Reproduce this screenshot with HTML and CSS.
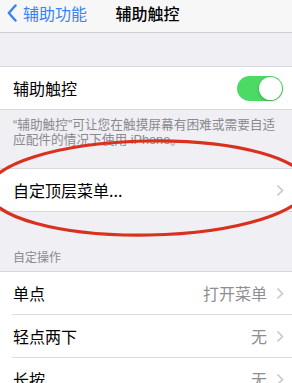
FILE: index.html
```html
<!DOCTYPE html>
<html lang="zh-CN">
<head>
    <meta charset="utf-8" />
    <title>辅助触控</title>
    <link rel="stylesheet" href="styles.css">
</head>
<body>
    <div class="screen">
        <div class="nav_bar">
            <div class="nav_back">
                <svg class="back_icon" width="10" height="18" viewBox="0 0 10 18">
                    <path d="M8.5 1.5 L1.8 9 L8.5 16.5" fill="none" stroke="#3a82f7" stroke-width="2.4" stroke-linecap="round" stroke-linejoin="round" />
                </svg>
                <span>辅助功能</span>
            </div>
            <div class="nav_title">辅助触控</div>
        </div>

        <div class="gap_top"></div>

        <div class="group">
            <div class="row">
                <span class="row_label">辅助触控</span>
                <div class="switch_on"><div class="switch_knob"></div></div>
            </div>
        </div>
        <div class="group_footer">“辅助触控”可让您在触摸屏幕有困难或需要自适应配件的情况下使用 iPhone。</div>

        <div class="group">
            <div class="row">
                <span class="row_label">自定顶层菜单...</span>
                <span class="chevron">
                    <svg width="8" height="13" viewBox="0 0 8 13"><path d="M1.5 1.5 L6.5 6.5 L1.5 11.5" fill="none" stroke="#c7c7cc" stroke-width="1.6" /></svg>
                </span>
            </div>
        </div>

        <div class="group_header">自定操作</div>

        <div class="group">
            <div class="row">
                <span class="row_label">单点</span>
                <span class="row_value">打开菜单</span>
                <span class="chevron">
                    <svg width="8" height="13" viewBox="0 0 8 13"><path d="M1.5 1.5 L6.5 6.5 L1.5 11.5" fill="none" stroke="#c7c7cc" stroke-width="1.6" /></svg>
                </span>
            </div>
            <div class="row">
                <span class="row_label">轻点两下</span>
                <span class="row_value">无</span>
                <span class="chevron">
                    <svg width="8" height="13" viewBox="0 0 8 13"><path d="M1.5 1.5 L6.5 6.5 L1.5 11.5" fill="none" stroke="#c7c7cc" stroke-width="1.6" /></svg>
                </span>
            </div>
            <div class="row">
                <span class="row_label">长按</span>
                <span class="row_value">无</span>
                <span class="chevron">
                    <svg width="8" height="13" viewBox="0 0 8 13"><path d="M1.5 1.5 L6.5 6.5 L1.5 11.5" fill="none" stroke="#c7c7cc" stroke-width="1.6" /></svg>
                </span>
            </div>
        </div>

        <!-- hand drawn red mark over the menu row -->
        <svg class="red_mark" width="292" height="383" viewBox="0 0 292 383">
            <ellipse cx="148" cy="188" rx="160" ry="47" fill="none" stroke="#d8321f" stroke-width="3.2" transform="rotate(-1 148 188)" />
        </svg>
    </div>
</body>
</html>
```

FILE: styles.css
```css
body {
    margin: 0;
    font-family: "Noto Sans CJK SC", "Liberation Sans", sans-serif;
    background-color: #efeff4;
}

.screen {
    position: relative;
    width: 292px;
    height: 383px;
    overflow: hidden;
    background-color: #efeff4;
}

.nav_bar {
    position: relative;
    height: 32px;
    background-color: #f7f7f8;
    border-bottom: 1px solid #cfcfd3;
    display: flex;
    align-items: center;
}

.nav_back {
    display: flex;
    align-items: center;
    gap: 6px;
    padding-left: 7px;
    color: #3a82f7;
    font-size: 16px;
    margin-top: -6px;
}

.nav_title {
    position: absolute;
    left: 3px;
    right: 0;
    top: 0;
    height: 26px;
    line-height: 26px;
    text-align: center;
    font-size: 16px;
    font-weight: 500;
    color: #000;
    pointer-events: none;
}

.gap_top {
    height: 33px;
}

.group {
    background-color: #ffffff;
    border-top: 1px solid #d8d8dc;
    border-bottom: 1px solid #d8d8dc;
}

.row {
    height: 42px;
    display: flex;
    align-items: center;
    padding: 0 8px 0 13px;
    position: relative;
}

.row + .row {
    border-top: 1px solid #dcdce0;
    margin-left: 12px;
    padding-left: 1px;
}

.row_label {
    flex: 1;
    font-size: 16px;
    color: #000;
}

.row_value {
    font-size: 16px;
    color: #8e8e93;
    margin-right: 9px;
}

.chevron {
    display: flex;
    align-items: center;
}

.switch_on {
    width: 46px;
    height: 25px;
    border-radius: 13px;
    background-color: #4cd964;
    position: relative;
    margin-right: 1px;
}

.switch_knob {
    position: absolute;
    top: 1px;
    right: 1px;
    width: 23px;
    height: 23px;
    border-radius: 50%;
    background-color: #fff;
    box-shadow: 0 1px 3px rgba(0, 0, 0, 0.25);
}

.group_footer {
    padding: 8px 8px 20px 13px;
    font-family: "Liberation Sans", "Noto Sans CJK SC", sans-serif;
    font-size: 12.7px;
    line-height: 15px;
    color: #8a8a8f;
}

.group_header {
    height: 59px;
    box-sizing: border-box;
    padding: 38px 0 0 13px;
    font-size: 12px;
    line-height: 14px;
    color: #8a8a8f;
}

.red_mark {
    position: absolute;
    left: 0;
    top: 0;
    pointer-events: none;
}
```
